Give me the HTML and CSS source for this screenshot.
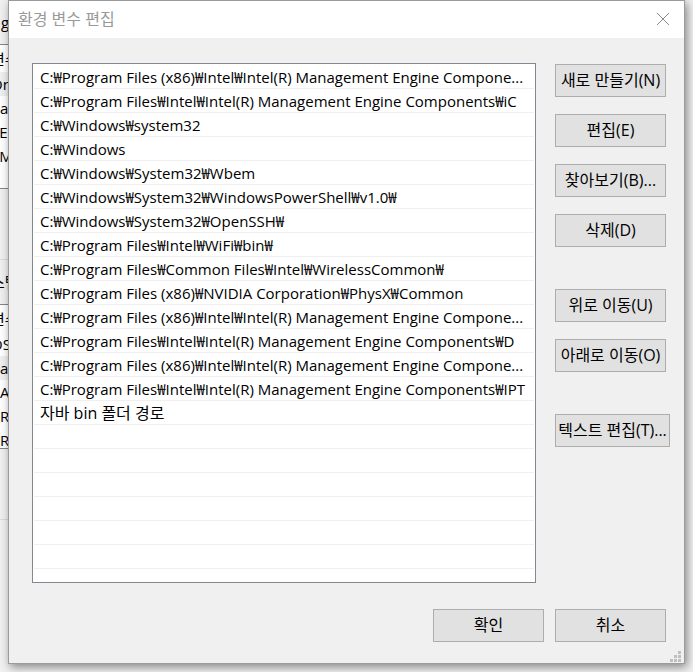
FILE: index.html
```html
<!DOCTYPE html>
<html lang="ko">
<head>
<meta charset="utf-8">
<meta name="viewport" content="width=device-width, initial-scale=1">
<title>환경 변수 편집</title>
<link rel="stylesheet" href="styles.css">
</head>
<body>
<div class="desktop">
  <div class="backdrop" aria-hidden="true">
    <p class="group-title group-title-user">g</p>
    <ul class="back-list">
      <li class="back-head">변수</li>
      <li class="shaded">On</li>
      <li>Pat</li>
      <li>TEI</li>
      <li>TM</li>
    </ul>
    <p class="group-title group-title-system">스템</p>
    <ul class="back-list">
      <li class="back-head">변수</li>
      <li>OS</li>
      <li class="shaded">Pat</li>
      <li>PA</li>
      <li>PR</li>
      <li>PR</li>
    </ul>
    <div class="group-end"></div>
  </div>

  <main class="dialog" role="dialog" aria-labelledby="dialog-title">
    <header class="titlebar">
      <h1 id="dialog-title">환경 변수 편집</h1>
      <button class="close" type="button" aria-label="닫기">
        <svg width="14" height="14" viewBox="0 0 14 14"><path d="M1 1L13 13M13 1L1 13" fill="none" stroke="#8a8a8a" stroke-width="1"/></svg>
      </button>
    </header>
    <div class="content">
      <ul class="paths">
        <li>C:₩Program Files (x86)₩Intel₩Intel(R) Management Engine Compone...</li>
        <li>C:₩Program Files₩Intel₩Intel(R) Management Engine Components₩iC</li>
        <li>C:₩Windows₩system32</li>
        <li>C:₩Windows</li>
        <li>C:₩Windows₩System32₩Wbem</li>
        <li>C:₩Windows₩System32₩WindowsPowerShell₩v1.0₩</li>
        <li>C:₩Windows₩System32₩OpenSSH₩</li>
        <li>C:₩Program Files₩Intel₩WiFi₩bin₩</li>
        <li>C:₩Program Files₩Common Files₩Intel₩WirelessCommon₩</li>
        <li>C:₩Program Files (x86)₩NVIDIA Corporation₩PhysX₩Common</li>
        <li>C:₩Program Files (x86)₩Intel₩Intel(R) Management Engine Compone...</li>
        <li>C:₩Program Files₩Intel₩Intel(R) Management Engine Components₩D</li>
        <li>C:₩Program Files (x86)₩Intel₩Intel(R) Management Engine Compone...</li>
        <li>C:₩Program Files₩Intel₩Intel(R) Management Engine Components₩IPT</li>
        <li class="hangul">자바 bin 폴더 경로</li>
        <li></li>
        <li></li>
        <li></li>
        <li></li>
        <li></li>
        <li></li>
      </ul>
      <div class="actions">
        <div class="action-group">
          <button class="btn" type="button">새로 만들기(N)</button>
          <button class="btn" type="button">편집(E)</button>
          <button class="btn" type="button">찾아보기(B)...</button>
          <button class="btn" type="button">삭제(D)</button>
        </div>
        <div class="action-group">
          <button class="btn" type="button">위로 이동(U)</button>
          <button class="btn" type="button">아래로 이동(O)</button>
        </div>
        <div class="action-group">
          <button class="btn btn-wide" type="button">텍스트 편집(T)...</button>
        </div>
      </div>
    </div>
    <footer class="footer">
      <button class="btn" type="button">확인</button>
      <button class="btn" type="button">취소</button>
    </footer>
    <svg class="grip" width="11" height="11" viewBox="0 0 11 11" fill="#bfbfbf" aria-hidden="true"><path d="M8 0h3v3h-3zM4 4h3v3h-3zM8 4h3v3h-3zM0 8h3v3h-3zM4 8h3v3h-3zM8 8h3v3h-3z"/></svg>
  </main>
</div>
</body>
</html>
```
FILE: styles.css
```css
* {
  box-sizing: border-box;
}

body {
  margin: 0;
  background: #f0f0f0;
  color: #000;
  font: 15px/24px "Open Sans", "Noto Sans CJK KR", sans-serif;
}

h1, p, ul {
  margin: 0;
  padding: 0;
  font-weight: 400;
}

ul {
  list-style: none;
}

.desktop {
  display: grid;
  min-height: 100vh;
  overflow: hidden;
}

.backdrop,
.dialog {
  grid-area: 1 / 1;
  min-width: 0;
}

.backdrop {
  width: 50%;
  white-space: nowrap;
}

.group-title-user {
  padding: 10px 0 10px 1px;
}

.group-title-system {
  margin: 70px 0 0;
  padding: 10px 0;
  border-top: 1px solid #dcdcdc;
  text-indent: -9px;
}

.back-list {
  height: 145px;
  border: 1px solid #828790;
  border-width: 1px 0;
  background: #fff;
  text-indent: -9px;
  overflow: hidden;
}

.back-head {
  padding: 2px 0 1px;
}

.shaded {
  background: #f0f0f0;
}

.group-end {
  margin-top: 70px;
  border-top: 1px solid #dcdcdc;
}

.dialog {
  position: relative;
  align-self: start;
  margin: 0 8px;
  border: 1px solid #9b9b9b;
  background: #f0f0f0;
  box-shadow: 2px 3px 9px rgba(0, 0, 0, 0.45);
}

.titlebar {
  display: flex;
  align-items: center;
  justify-content: space-between;
  height: 37px;
  padding: 0 14px 2px 9px;
  background: #fff;
}

.titlebar h1 {
  font-size: 16px;
  color: #999;
}

.close {
  display: flex;
  padding: 0;
  border: 0;
  background: none;
}

.content {
  display: flex;
  gap: 19px;
  padding: 25px 14px 26px 23px;
}

.paths {
  flex: 1;
  min-width: 0;
  padding: 1px 1px 13px;
  border: 1px solid #828790;
  background: #fff;
}

.paths li {
  height: 24px;
  padding-left: 6px;
  border-bottom: 1px solid #f0f0f0;
  white-space: nowrap;
}

.paths .hangul {
  font-size: 16px;
}

.actions {
  display: flex;
  flex-direction: column;
  gap: 42px;
  width: 115px;
  padding-top: 1px;
}

.action-group {
  display: flex;
  flex-direction: column;
  gap: 17px;
}

.btn {
  display: flex;
  align-items: center;
  justify-content: center;
  width: 111px;
  height: 33px;
  padding: 0 0 2px;
  border: 1px solid #adadad;
  background: #e1e1e1;
  color: #000;
  font: inherit;
  font-size: 16px;
  white-space: nowrap;
}

.btn-wide {
  width: 115px;
}

.footer {
  display: flex;
  justify-content: flex-end;
  gap: 11px;
  padding: 0 18px 21px;
}

.grip {
  position: absolute;
  right: 3px;
  bottom: 1px;
}
```
